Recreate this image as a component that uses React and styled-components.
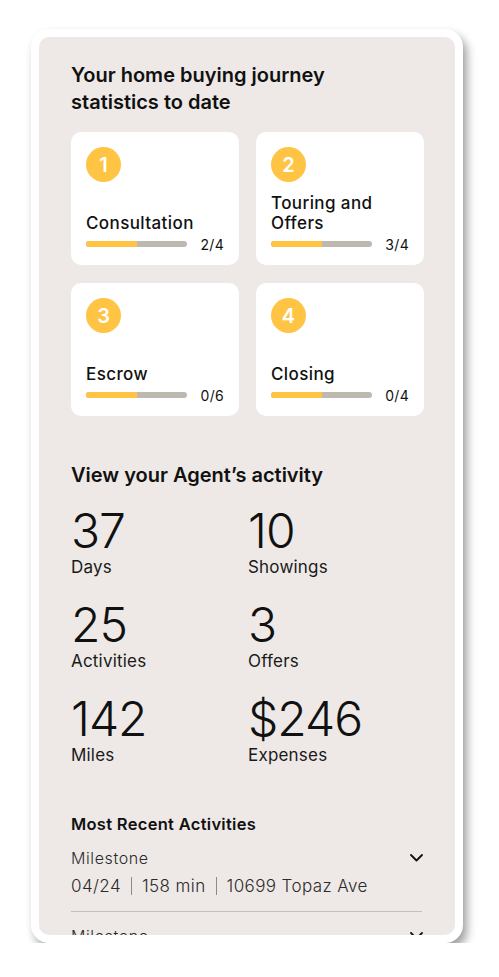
import React from "react";
import styled, { createGlobalStyle } from "styled-components";

const GlobalStyle = createGlobalStyle`
  body {
    margin: 0;
    background: #ffffff;
    font-family: Inter, "Noto Sans", "Liberation Sans", sans-serif;
    color: #111111;
  }
`;

const Page = styled.div`
  padding: 29px 0 0 31px;
`;

const Frame = styled.div`
  width: 432px;
  padding: 8px;
  box-sizing: border-box;
  background: #ffffff;
  border-radius: 18px;
  box-shadow: 4px 6px 10px rgba(0, 0, 0, 0.38);
`;

const Panel = styled.div`
  height: 898px;
  padding: 25px 33px 0 32px;
  box-sizing: border-box;
  background: #eee9e6;
  border-radius: 10px;
  overflow: hidden;
`;

const Heading = styled.h2`
  margin: ${(p) => p.$top || 0}px 0 0 0;
  font-size: 20px;
  line-height: 27px;
  font-weight: 600;
  letter-spacing: 0;
`;

const CardGrid = styled.div`
  margin-top: 16px;
  display: grid;
  grid-template-columns: 168px 168px;
  grid-auto-rows: 133px;
  column-gap: 17px;
  row-gap: 18px;
`;

const Card = styled.div`
  background: #ffffff;
  border-radius: 10px;
  padding: 15px 15px 13px 15px;
  box-sizing: border-box;
  display: flex;
  flex-direction: column;
`;

const StepCircle = styled.div`
  width: 35px;
  height: 35px;
  border-radius: 50%;
  background: #ffc443;
  color: #ffffff;
  font-size: 20px;
  font-weight: 600;
  display: flex;
  align-items: center;
  justify-content: center;
`;

const StepName = styled.div`
  margin-top: auto;
  margin-bottom: 3px;
  font-size: 17px;
  line-height: 20px;
  font-weight: 500;
  letter-spacing: 0.4px;
`;

const BarRow = styled.div`
  height: 16px;
  display: flex;
  align-items: center;
  justify-content: space-between;
`;

const Track = styled.div`
  width: 101px;
  height: 6px;
  border-radius: 3px;
  background: #bdb8b0;
  overflow: hidden;
`;

const Fill = styled.div`
  height: 100%;
  background: #ffc443;
`;

const Fraction = styled.span`
  font-size: 14px;
  font-weight: 400;
  letter-spacing: 0.3px;
`;

const StatGrid = styled.div`
  margin-top: 17px;
  display: grid;
  grid-template-columns: 177px auto;
  row-gap: 22px;
`;

const Stat = styled.div`
  display: flex;
  flex-direction: column;
`;

const StatValue = styled.div`
  font-size: 48px;
  line-height: 50px;
  font-weight: 300;
  letter-spacing: -1px;
`;

const StatLabel = styled.div`
  font-size: 17px;
  line-height: 22px;
  font-weight: 400;
  letter-spacing: 0.2px;
  color: #1a1a1a;
`;

const RecentTitle = styled.div`
  margin-top: 48px;
  font-size: 16.5px;
  line-height: 20px;
  font-weight: 600;
  letter-spacing: 0.3px;
`;

const ActivityList = styled.div`
  margin-top: 14px;
`;

const ActivityItem = styled.div`
  padding-bottom: 14px;
  margin-bottom: 14px;
  border-bottom: 1px solid #c4beb7;
`;

const ActivityHead = styled.div`
  display: flex;
  justify-content: space-between;
  align-items: center;
  font-size: 16px;
  line-height: 20px;
  font-weight: 300;
  letter-spacing: 0.6px;
  color: #2b2b2b;
`;

const ActivityMeta = styled.div`
  margin-top: 7px;
  display: flex;
  align-items: center;
  font-size: 17px;
  line-height: 22px;
  font-weight: 300;
  letter-spacing: 0.4px;
  color: #2b2b2b;
`;

const Divider = styled.span`
  width: 1px;
  height: 18px;
  background: #8f8a85;
  margin: 0 10px;
`;

const Chevron = () => (
  <svg width="13" height="8" viewBox="0 0 13 8" fill="none" style={{ marginRight: -1 }}>
    <path d="M1 1l5.5 5.5L12 1" stroke="#111" strokeWidth="1.8" strokeLinecap="round" strokeLinejoin="round" />
  </svg>
);

const steps = [
  { n: 1, name: "Consultation", done: "2/4" },
  { n: 2, name: "Touring and Offers", done: "3/4" },
  { n: 3, name: "Escrow", done: "0/6" },
  { n: 4, name: "Closing", done: "0/4" },
];

const stats = [
  ["37", "Days"],
  ["10", "Showings"],
  ["25", "Activities"],
  ["3", "Offers"],
  ["142", "Miles"],
  ["$246", "Expenses"],
];

const activities = [
  { type: "Milestone", meta: ["04/24", "158 min", "10699 Topaz Ave"] },
  { type: "Milestone", meta: ["04/22", "45 min", "10699 Topaz Ave"] },
];

export default function App() {
  return (
    <Page>
      <GlobalStyle />
      <Frame>
        <Panel>
          <Heading>
            Your home buying journey
            <br />
            statistics to date
          </Heading>
          <CardGrid>
            {steps.map((s) => (
              <Card key={s.n}>
                <StepCircle>{s.n}</StepCircle>
                <StepName>{s.name}</StepName>
                <BarRow>
                  <Track>
                    <Fill style={{ width: "50%" }} />
                  </Track>
                  <Fraction>{s.done}</Fraction>
                </BarRow>
              </Card>
            ))}
          </CardGrid>

          <Heading $top={46}>View your Agent’s activity</Heading>
          <StatGrid>
            {stats.map(([v, l]) => (
              <Stat key={l}>
                <StatValue>{v}</StatValue>
                <StatLabel>{l}</StatLabel>
              </Stat>
            ))}
          </StatGrid>

          <RecentTitle>Most Recent Activities</RecentTitle>
          <ActivityList>
            {activities.map((a, i) => (
              <ActivityItem key={i}>
                <ActivityHead>
                  {a.type}
                  <Chevron />
                </ActivityHead>
                <ActivityMeta>
                  {a.meta.map((m, j) => (
                    <React.Fragment key={j}>
                      {j > 0 && <Divider />}
                      {m}
                    </React.Fragment>
                  ))}
                </ActivityMeta>
              </ActivityItem>
            ))}
          </ActivityList>
        </Panel>
      </Frame>
    </Page>
  );
}
